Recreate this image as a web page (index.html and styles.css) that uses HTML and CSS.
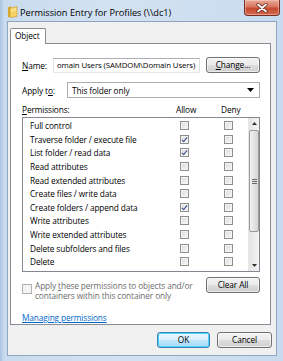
FILE: index.html
```html
<!DOCTYPE html>
<html>
<head>
<meta charset="utf-8">
<link rel="stylesheet" href="styles.css">
</head>
<body>
<div class="window">
  <div class="titlebar">
    <svg class="folder" width="11" height="13" viewBox="0 0 11 13">
      <path d="M1 2.5 L4 1 L4 12 L1 12 Z" fill="#d9a92b"/>
      <path d="M3 3 L10 1.5 L10 11.5 L3 12.5 Z" fill="#f4d266" stroke="#c99a26" stroke-width="0.6"/>
      <path d="M4 4 L9 3 L9 6 L4 7 Z" fill="#fbe69a" opacity="0.7"/>
    </svg>
    <span class="title">Permission Entry for Profiles (\\dc1)</span>
    <div class="close">
      <svg width="12" height="10" viewBox="0 0 12 10">
        <path d="M2 1.5 L10 8.5 M10 1.5 L2 8.5" stroke="#5a1f14" stroke-width="3.2" stroke-linecap="round"/>
        <path d="M2 1.5 L10 8.5 M10 1.5 L2 8.5" stroke="#ffffff" stroke-width="1.8" stroke-linecap="round"/>
      </svg>
    </div>
  </div>
  <div class="client">
    <div class="tabs"><div class="tab">Object</div></div>
    <div class="panel">
      <div class="name-row">
        <span class="label"><u>N</u>ame:</span>
        <div class="textbox">omain Users (SAMDOM\Domain Users)</div>
        <div class="btn change"><u>C</u>hange...</div>
      </div>
      <div class="apply-row">
        <span class="label">Apply t<u>o</u>:</span>
        <div class="combo"><span>This folder only</span>
          <svg width="7" height="4" viewBox="0 0 7 4"><path d="M0 0 H7 L3.5 4 Z" fill="#000"/></svg>
        </div>
      </div>
      <div class="perm-head">
        <span class="ph-name"><u>P</u>ermissions:</span>
        <span class="ph-allow">Allow</span>
        <span class="ph-deny">Deny</span>
      </div>
      <div class="list">
        <div class="rows">
          <div class="row"><span>Full control</span><i class="cb"></i><i></i><i class="cb"></i></div>
          <div class="row"><span>Traverse folder / execute file</span><i class="cb on"></i><i></i><i class="cb"></i></div>
          <div class="row"><span>List folder / read data</span><i class="cb on"></i><i></i><i class="cb"></i></div>
          <div class="row"><span>Read attributes</span><i class="cb"></i><i></i><i class="cb"></i></div>
          <div class="row"><span>Read extended attributes</span><i class="cb"></i><i></i><i class="cb"></i></div>
          <div class="row"><span>Create files / write data</span><i class="cb"></i><i></i><i class="cb"></i></div>
          <div class="row"><span>Create folders / append data</span><i class="cb on"></i><i></i><i class="cb"></i></div>
          <div class="row"><span>Write attributes</span><i class="cb"></i><i></i><i class="cb"></i></div>
          <div class="row"><span>Write extended attributes</span><i class="cb"></i><i></i><i class="cb"></i></div>
          <div class="row"><span>Delete subfolders and files</span><i class="cb"></i><i></i><i class="cb"></i></div>
          <div class="row"><span>Delete</span><i class="cb"></i><i></i><i class="cb"></i></div>
          <div class="row"><span>Read permissions</span><i class="cb"></i><i></i><i class="cb"></i></div>
        </div>
        <div class="scrollbar">
          <div class="sb-btn"><svg width="5" height="3" viewBox="0 0 5 3"><path d="M0 3 H5 L2.5 0 Z" fill="#333"/></svg></div>
          <div class="sb-track">
            <div class="thumb"><span class="grip"></span></div>
          </div>
          <div class="sb-btn"><svg width="5" height="3" viewBox="0 0 5 3"><path d="M0 0 H5 L2.5 3 Z" fill="#333"/></svg></div>
        </div>
      </div>
      <div class="inherit-row">
        <i class="cb disabled"></i>
        <span class="inherit-text">Apply <u>t</u>hese permissions to objects and/or<br>containers within this container only</span>
        <div class="btn clear">Clear All</div>
      </div>
      <a class="link" href="#">Managing permissions</a>
    </div>
    <div class="footer">
      <div class="btn ok">OK</div>
      <div class="btn cancel">Cancel</div>
    </div>
  </div>
</div>
</body>
</html>
```
FILE: styles.css
```css
* { box-sizing: border-box; }
html, body { margin: 0; padding: 0; }
body {
  width: 283px;
  height: 361px;
  overflow: hidden;
  font-family: "Open Sans", "Noto Sans", sans-serif;
  font-size: 8.3px;
  letter-spacing: -0.12px;
  color: #000;
  background: #b8cfe6;
}
u { text-decoration: underline; text-underline-offset: 1px; }
.window {
  width: 283px;
  height: 361px;
  display: flex;
  flex-direction: column;
  background: linear-gradient(90deg, #a9c3df 0px, #c9dbee 4px, #d3e2f2 40%, #c8dbee 100%);
  padding: 0 6px 5px 7px;
}
.titlebar {
  height: 21px;
  display: flex;
  align-items: center;
  position: relative;
}
.folder { margin-top: 2px; }
.title {
  font-size: 9.2px;
  letter-spacing: 0;
  margin-left: 2px;
  margin-top: 3px;
  color: #000;
}
.close {
  position: absolute;
  right: -3px;
  top: 0;
  width: 36px;
  height: 16px;
  border: 1px solid #7a2e22;
  border-top: none;
  border-radius: 0 0 4px 4px;
  background: linear-gradient(#e9a998 0%, #d9755f 45%, #c54a31 55%, #d3694f 100%);
  display: flex;
  align-items: center;
  justify-content: center;
  box-shadow: inset 0 0 0 1px rgba(255,220,210,0.45);
}
.client {
  flex: 1;
  background: #f0f0f0;
  border: 1px solid #8ea5c0;
  padding: 6px 5px 0 2px;
  display: flex;
  flex-direction: column;
}
.tabs { display: flex; height: 15px; }
.tab {
  width: 36px;
  height: 16px;
  background: #fff;
  border: 1px solid #898c95;
  border-bottom: none;
  border-radius: 2px 2px 0 0;
  padding-left: 4px;
  line-height: 14px;
  position: relative;
  z-index: 1;
}
.panel {
  height: 282px;
  background: #fff;
  border: 1px solid #898c95;
  padding: 13px 10px 0 11px;
  display: flex;
  flex-direction: column;
}
.name-row { display: flex; align-items: center; height: 16px; }
.name-row .label { width: 31px; }
.textbox {
  width: 147px;
  height: 15px;
  border: 1px solid #abadb3;
  border-left-color: #e2e3ea;
  border-right-color: #dbdfe6;
  border-bottom-color: #e3e9ef;
  padding-left: 3px;
  line-height: 13px;
  font-size: 7.8px;
  letter-spacing: -0.1px;
  white-space: nowrap;
  overflow: hidden;
}
.btn {
  height: 16px;
  border: 1px solid #707070;
  border-radius: 3px;
  background: linear-gradient(#f2f2f2 0%, #ebebeb 48%, #dddddd 52%, #cfcfcf 100%);
  box-shadow: inset 0 0 0 1px rgba(255,255,255,0.6);
  display: flex;
  align-items: center;
  justify-content: center;
  line-height: 14px;
}
.change { width: 54px; margin-left: auto; }
.apply-row { display: flex; align-items: center; height: 16px; margin-top: 9px; }
.apply-row .label { width: 45px; }
.combo {
  flex: 1;
  height: 16px;
  border: 1px solid #acacac;
  background: #fff;
  display: flex;
  align-items: center;
  padding: 0 5px 0 4px;
  justify-content: space-between;
}
.perm-head {
  display: flex;
  height: 13px;
  margin-top: 5px;
  line-height: 13px;
}
.ph-name { flex: 1; }
.ph-allow { width: 45px; }
.ph-deny { width: 39px; }
.list {
  height: 155px;
  border: 1px solid #828790;
  display: flex;
  overflow: hidden;
  margin-top: 1px;
}
.rows { flex: 1; padding-top: 1px; overflow: hidden; }
.row {
  height: 13.6px;
  display: grid;
  grid-template-columns: 1fr 9px 35px 9px 15px;
  align-items: center;
  padding-left: 7px;
  white-space: nowrap;
}
.cb {
  width: 9px;
  height: 9px;
  border: 1px solid #8f8f8f;
  background: linear-gradient(135deg, #dcdcdc, #f6f6f6);
  box-shadow: inset 0 0 0 1px #f4f4f4;
  position: relative;
  display: block;
}
.cb.on::after {
  content: "";
  position: absolute;
  left: 2px;
  top: 0px;
  width: 2px;
  height: 5px;
  border: solid #3a4d8f;
  border-width: 0 1.5px 1.5px 0;
  transform: rotate(40deg);
}
.scrollbar {
  width: 11px;
  background: linear-gradient(90deg, #e4e4e4, #f5f5f5);
  border-left: 1px solid #e8e8e8;
  display: flex;
  flex-direction: column;
}
.sb-btn { height: 11px; display: flex; align-items: center; justify-content: center; }
.sb-track { flex: 1; padding-top: 1px; }
.thumb {
  height: 102px;
  border: 1px solid #9a9a9a;
  border-radius: 2px;
  background: linear-gradient(90deg, #f2f2f2, #e3e3e3 50%, #d6d6d6);
  display: flex;
  align-items: center;
  justify-content: center;
}
.grip {
  width: 5px;
  height: 5px;
  background: repeating-linear-gradient(#6a6a6a 0 1px, transparent 1px 2px);
}
.inherit-row {
  display: flex;
  align-items: flex-start;
  margin-top: 5px;
  height: 22px;
}
.cb.disabled {
  margin-top: 7px;
  width: 10px;
  height: 10px;
  border-color: #b1b1b1;
  background: #f4f4f4;
}
.inherit-text {
  margin-left: 3px;
  margin-top: 4px;
  color: #6d6d6d;
  line-height: 9.5px;
  white-space: nowrap;
}
.clear { width: 54px; margin-left: auto; }
.link {
  margin-top: 13px;
  color: #0066cc;
  text-decoration: underline;
  align-self: flex-start;
}
.footer {
  display: flex;
  justify-content: flex-end;
  gap: 7px;
  padding-top: 7px;
}
.ok {
  width: 53px;
  border-color: #3c7fb1;
  box-shadow: inset 0 0 0 1px #48d4fd;
  background: linear-gradient(#eaf6fd 0%, #d9f0fc 48%, #bee6fd 52%, #a7d9f5 100%);
}
.cancel { width: 55px; margin-right: -1px; }
```
